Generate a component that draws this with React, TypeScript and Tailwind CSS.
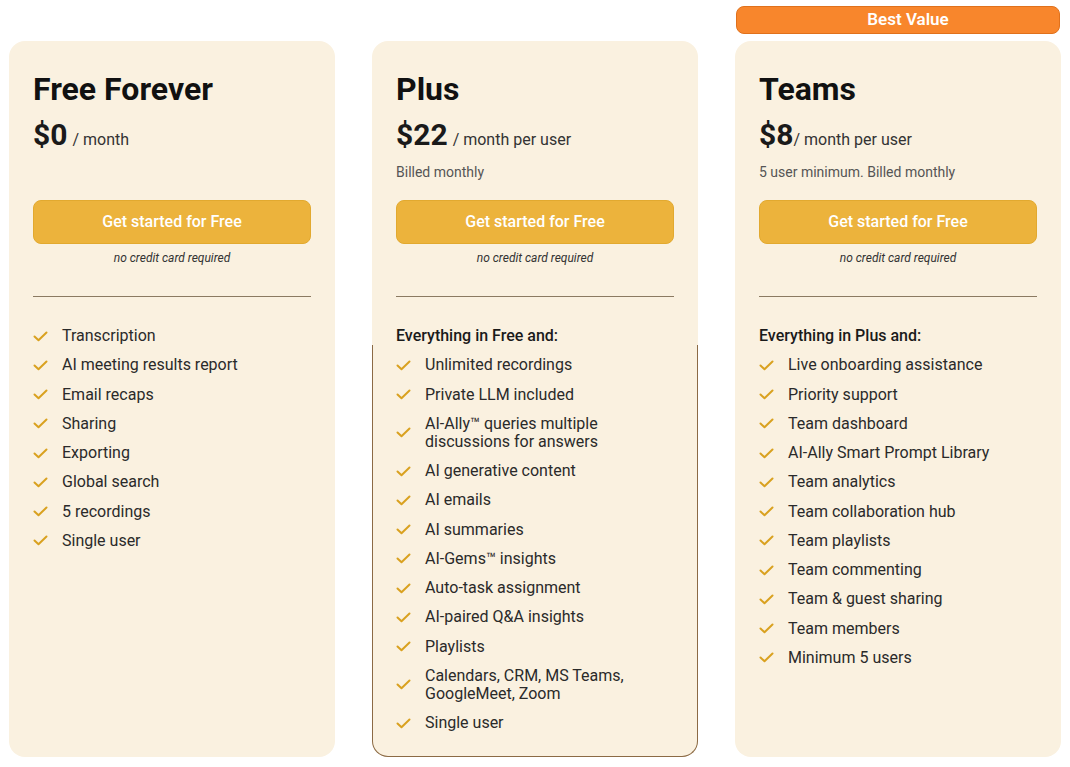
import React from "react";

type Plan = {
  title: string;
  price: string;
  per: string;
  gap: boolean;
  billed?: string;
  heading?: string;
  features: string[];
  badge?: boolean;
  outline?: boolean;
};

const plans: Plan[] = [
  {
    title: "Free Forever",
    price: "$0",
    per: "/ month",
    gap: true,
    features: [
      "Transcription",
      "AI meeting results report",
      "Email recaps",
      "Sharing",
      "Exporting",
      "Global search",
      "5 recordings",
      "Single user",
    ],
  },
  {
    title: "Plus",
    price: "$22",
    per: "/ month per user",
    gap: true,
    billed: "Billed monthly",
    heading: "Everything in Free and:",
    outline: true,
    features: [
      "Unlimited recordings",
      "Private LLM included",
      "AI-Ally™ queries multiple\ndiscussions for answers",
      "AI generative content",
      "AI emails",
      "AI summaries",
      "AI-Gems™ insights",
      "Auto-task assignment",
      "AI-paired Q&A insights",
      "Playlists",
      "Calendars, CRM, MS Teams,\nGoogleMeet, Zoom",
      "Single user",
    ],
  },
  {
    title: "Teams",
    price: "$8",
    per: "/ month per user",
    gap: false,
    billed: "5 user minimum. Billed monthly",
    heading: "Everything in Plus and:",
    badge: true,
    features: [
      "Live onboarding assistance",
      "Priority support",
      "Team dashboard",
      "AI-Ally Smart Prompt Library",
      "Team analytics",
      "Team collaboration hub",
      "Team playlists",
      "Team commenting",
      "Team & guest sharing",
      "Team members",
      "Minimum 5 users",
    ],
  },
];

function Check() {
  return (
    <svg width="15" height="11" viewBox="0 0 15 11" className="shrink-0">
      <path d="M1.5 5.5 L5.5 9.3 L13.5 1.5" fill="none" stroke="#d9a11f" strokeWidth="2" strokeLinecap="round" strokeLinejoin="round" />
    </svg>
  );
}

function Card({ p }: { p: Plan }) {
  return (
    <div className="flex w-[326px] flex-col">
      <div className="mb-[7px] h-[28px]">
        {p.badge && (
          <div className="mx-[1px] flex h-[28px] items-center justify-center rounded-[8px] border border-[#e0711c] bg-[#f8862c] pl-[20px] text-[17px] font-semibold text-white">
            Best Value
          </div>
        )}
      </div>
      <div className="relative h-[716px] rounded-[16px] bg-[#faf1e0] px-6 pt-[28px]">
        {p.outline && (
          <div className="pointer-events-none absolute bottom-0 left-0 right-0 top-[304px] rounded-b-[16px] border-x border-b border-[#8b6a45]" />
        )}
        <div className="text-[32px] font-bold leading-[40px] text-[#111]">{p.title}</div>
        <div className="mt-[8px] flex items-baseline leading-[36px]">
          <span className="text-[30px] font-bold text-[#1a1a1a]">{p.price}</span>
          <span className={p.gap ? "ml-[5px] text-[16px] text-[#333]" : "text-[16px] text-[#333]"}>{p.per}</span>
        </div>
        <div className="mt-[4px] h-[20px] text-[14px] leading-[20px] text-[#555]">{p.billed ?? ""}</div>
        <div className="mt-[18px] flex h-[44px] items-center justify-center rounded-[8px] border border-[#e2a92f] bg-[#ecb33c] text-[16px] font-medium text-white">
          Get started for Free
        </div>
        <div className="mt-[6px] text-center text-[12px] italic leading-[16px] text-[#333]">no credit card required</div>
        <div className="mt-[30px] h-px bg-[#8b7a62]" />
        <div className="mt-[30px] flex flex-col gap-[11.25px]">
          {p.heading && (
            <div className="text-[16px] font-medium leading-[18px] text-[#1a1a1a]">{p.heading}</div>
          )}
          {p.features.map((f) => (
            <div key={f} className="flex items-center">
              <div className="w-[29px]">
                <Check />
              </div>
              <div className="whitespace-pre-line text-[16px] leading-[18px] text-[#2a2a2a]">{f}</div>
            </div>
          ))}
        </div>
      </div>
    </div>
  );
}

export default function App() {
  return (
    <div className="min-h-[767px] w-[1070px] bg-white" style={{ fontFamily: "Roboto, 'Liberation Sans', sans-serif" }}>
      <div className="flex gap-[37px] pl-[9px] pt-[6px]">
        {plans.map((p) => (
          <Card key={p.title} p={p} />
        ))}
      </div>
    </div>
  );
}
